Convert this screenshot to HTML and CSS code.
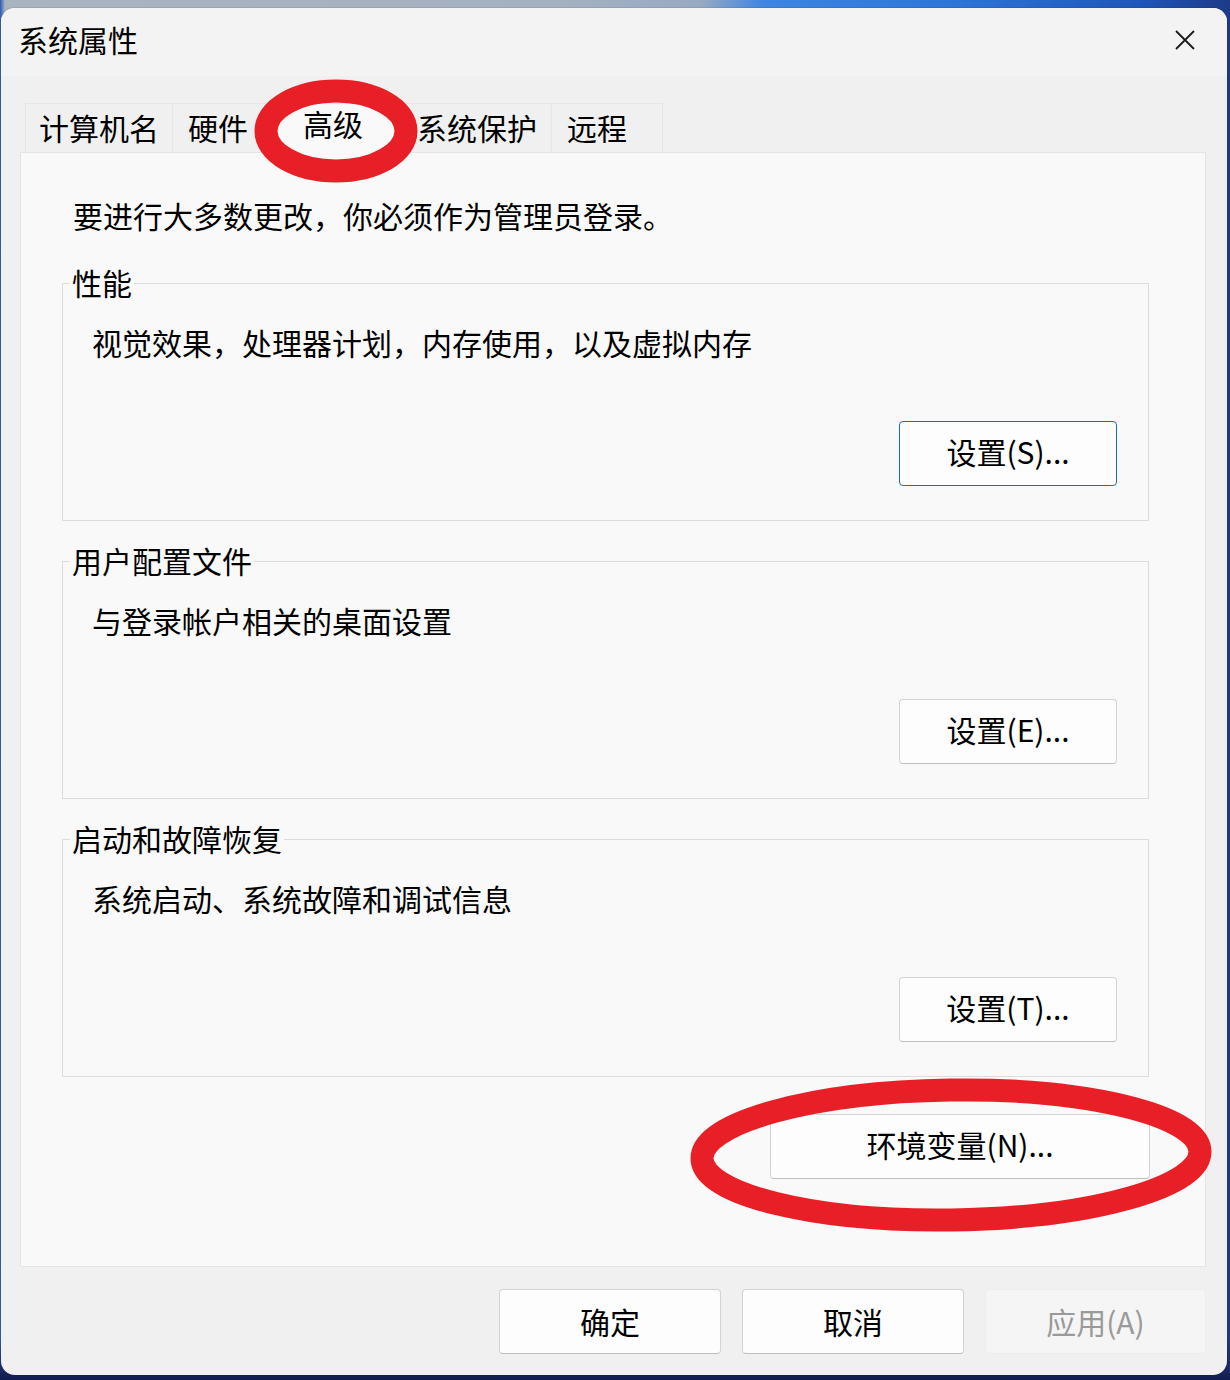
FILE: index.html
```html
<!DOCTYPE html>
<html lang="zh-CN">
<head>
<meta charset="utf-8">
<title>系统属性</title>
<link rel="stylesheet" href="styles.css">
</head>
<body>
<div class="desktop">
  <div class="dialog">
    <div class="titlebar">
      <div class="title">系统属性</div>
      <svg class="close" viewBox="0 0 20 20" width="20" height="20" aria-label="关闭">
        <path d="M1 1 L19 19 M19 1 L1 19" stroke="#1b1b1b" stroke-width="1.8" fill="none"/>
      </svg>
    </div>
    <div class="body">
      <div class="tabs">
        <div class="tab tab-name">计算机名</div>
        <div class="tab tab-hw">硬件</div>
        <div class="tab tab-adv selected">高级</div>
        <div class="tab tab-prot">系统保护</div>
        <div class="tab tab-remote">远程</div>
      </div>
      <div class="panel">
        <div class="notice">要进行大多数更改，你必须作为管理员登录。</div>
        <div class="group">
          <div class="legend">性能</div>
          <div class="desc">视觉效果，处理器计划，内存使用，以及虚拟内存</div>
          <button class="btn settings focused">设置(S)...</button>
        </div>
        <div class="group">
          <div class="legend">用户配置文件</div>
          <div class="desc">与登录帐户相关的桌面设置</div>
          <button class="btn settings">设置(E)...</button>
        </div>
        <div class="group">
          <div class="legend">启动和故障恢复</div>
          <div class="desc">系统启动、系统故障和调试信息</div>
          <button class="btn settings">设置(T)...</button>
        </div>
        <button class="btn env">环境变量(N)...</button>
      </div>
      <div class="footer">
        <button class="btn action">确定</button>
        <button class="btn action">取消</button>
        <button class="btn action disabled">应用(A)</button>
      </div>
    </div>
  </div>
  <svg class="marks" width="1230" height="1380" viewBox="0 0 1230 1380">
    <ellipse cx="336" cy="131" rx="70" ry="40" fill="none" stroke="#e81f27" stroke-width="23"/>
    <ellipse cx="951" cy="1155" rx="249" ry="65" fill="none" stroke="#e81f27" stroke-width="23" transform="rotate(-0.8 951 1155)"/>
  </svg>
</div>
</body>
</html>
```

FILE: styles.css
```css
* {
  box-sizing: border-box;
}

html, body {
  margin: 0;
  padding: 0;
}

body {
  width: 1230px;
  height: 1380px;
  overflow: hidden;
  font-family: "Noto Sans CJK SC", "Noto Sans", "Liberation Sans", sans-serif;
  color: #000;
}

.desktop {
  position: relative;
  width: 1230px;
  height: 1380px;
  padding: 8px 0 0 1px;
  background:
    linear-gradient(180deg, rgba(0,0,0,0) 0%, rgba(0,0,0,0) 97%, #17265e 99.4%, #0f1c4a 100%),
    linear-gradient(90deg, #2a57b0 0%, #a9b4c1 0.4%, #a4b1c0 45%, #98aac2 57%, #3e86e2 62%, #2c74d8 78%, #1f55b8 93%, #1d3a88 100%);
}

.dialog {
  width: 1226px;
  height: 1367px;
  background: #f0f0f0;
  border-radius: 14px;
  overflow: hidden;
  box-shadow: 0 0 0 1px rgba(0, 0, 0, 0.08);
}

.titlebar {
  height: 68px;
  background: #f3f3f3;
  display: flex;
  align-items: center;
  padding-left: 17px;
}

.title {
  font-size: 30px;
  line-height: 40px;
  margin-top: -7px;
}

.close {
  margin-left: auto;
  margin-right: 32px;
  margin-top: -4px;
}

.body {
  padding: 0 21px 0 19px;
}

.tabs {
  display: flex;
  align-items: flex-end;
  margin-top: 27px;
  padding-left: 5px;
  height: 49px;
}

.tab {
  height: 49px;
  line-height: 46px;
  font-size: 30px;
  padding-left: 15px;
  white-space: nowrap;
  background: #f0f0f0;
  border-top: 1px solid #e6e6e6;
  border-right: 1px solid #e6e6e6;
}

.tab-name {
  width: 148px;
  padding-left: 13px;
  border-left: 1px solid #e6e6e6;
}

.tab-hw {
  width: 92px;
}

.tab-adv {
  width: 136px;
  padding-left: 38px;
}

.tab-prot {
  width: 151px;
  padding-left: 16px;
}

.tab-remote {
  width: 111px;
}

.tab.selected {
  position: relative;
  z-index: 1;
  height: 50px;
  line-height: 38px;
  margin-bottom: -1px;
  background: #f9f9f9;
}

.panel {
  background: #f9f9f9;
  border: 1px solid #e4e4e4;
  padding: 42px 56px 87px 41px;
}

.notice {
  font-size: 30px;
  line-height: 40px;
  margin-left: 11px;
}

.group {
  margin-top: 48px;
  border: 1px solid #dcdcdc;
  padding: 0 31px 34px 29px;
  display: flex;
  flex-direction: column;
}

.group + .group {
  margin-top: 40px;
}

.legend {
  width: fit-content;
  height: 34px;
  line-height: 31px;
  margin: -17px 0 0 -22px;
  padding: 0 2px;
  background: #f9f9f9;
  font-size: 30px;
}

.desc {
  margin-top: 21px;
  font-size: 30px;
  line-height: 40px;
}

.btn {
  font-family: "Noto Sans CJK SC", "Noto Sans", "Liberation Sans", sans-serif;
  font-size: 30px;
  line-height: 40px;
  color: #000;
  background: #fdfdfd;
  border: 1px solid #d3d3d3;
  border-bottom-color: #bfbfbf;
  border-radius: 4px;
  padding: 0 0 5px;
  height: 65px;
  display: flex;
  align-items: center;
  justify-content: center;
}

.settings {
  width: 218px;
  margin-top: 59px;
  align-self: flex-end;
}

.settings.focused {
  border: 1px solid #1a6cb8;
}

.env {
  width: 380px;
  margin: 37px -1px 0 auto;
}

.footer {
  display: flex;
  justify-content: flex-end;
  gap: 21px;
  margin-top: 22px;
}

.action {
  width: 222px;
  padding-bottom: 1px;
}

.action.disabled {
  background: #f5f5f5;
  border-color: #ececec;
  color: #9a9a9a;
  width: 221px;
}

.marks {
  position: absolute;
  left: 0;
  top: 0;
  z-index: 5;
  pointer-events: none;
}
```
